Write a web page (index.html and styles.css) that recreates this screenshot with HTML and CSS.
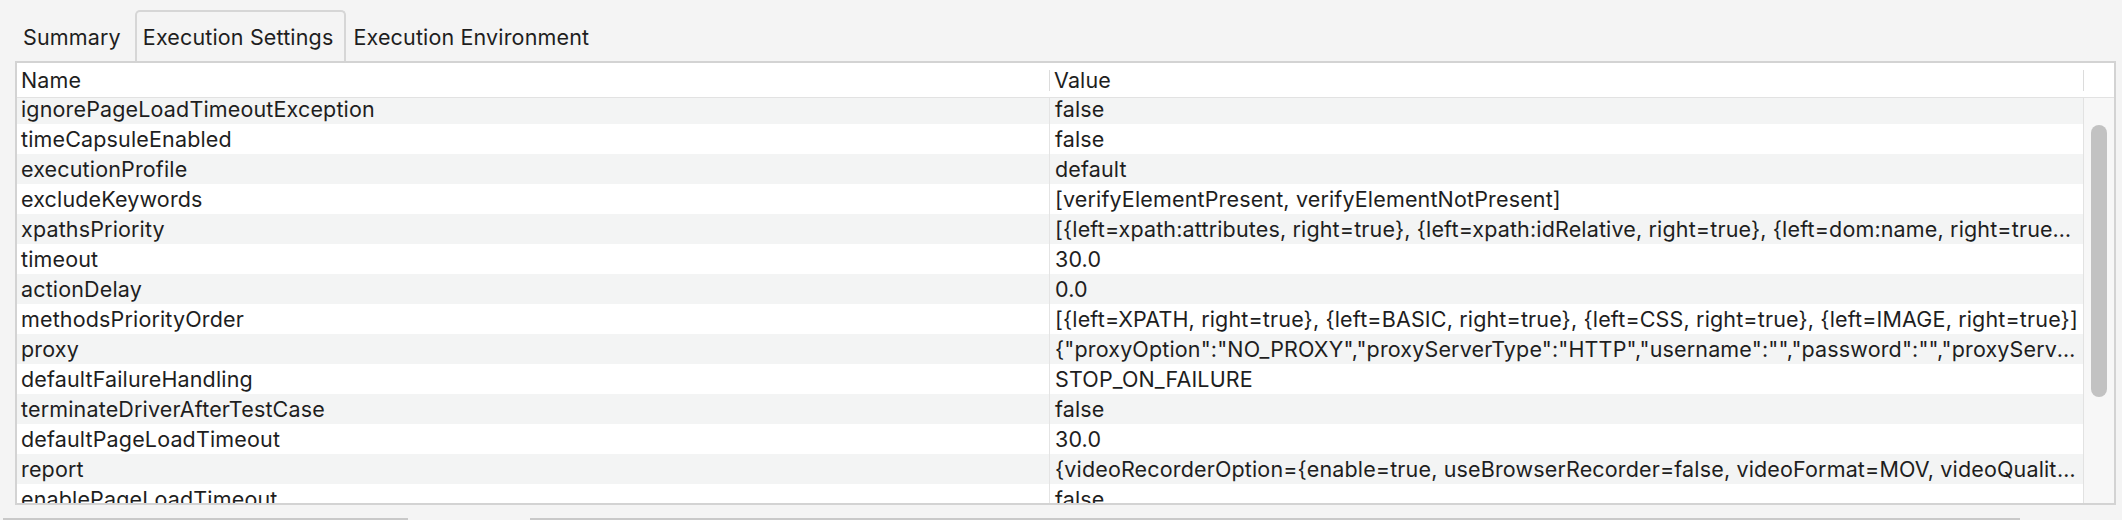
FILE: index.html
```html
<!DOCTYPE html>
<html>
<head>
<meta charset="utf-8">
<link rel="stylesheet" href="styles.css">
</head>
<body>
<div class="page">
  <div class="tabs">
    <div class="tab tab-first">Summary</div>
    <div class="tab tab-active">Execution Settings</div>
    <div class="tab tab-after">Execution Environment</div>
  </div>
  <div class="table">
    <div class="thead">
      <div class="th th-name">Name</div>
      <div class="th th-value">Value</div>
      <div class="th th-end"></div>
    </div>
    <div class="tbody">
      <div class="rows">
        <div class="rows-inner">
          <div class="row"><div class="cell name">ignorePageLoadTimeoutException</div><div class="cell value">false</div></div>
          <div class="row"><div class="cell name">timeCapsuleEnabled</div><div class="cell value">false</div></div>
          <div class="row"><div class="cell name">executionProfile</div><div class="cell value">default</div></div>
          <div class="row"><div class="cell name">excludeKeywords</div><div class="cell value">[verifyElementPresent, verifyElementNotPresent]</div></div>
          <div class="row"><div class="cell name">xpathsPriority</div><div class="cell value">[{left=xpath:attributes, right=true}, {left=xpath:idRelative, right=true}, {left=dom:name, right=true}, {left=xpath:link, right=true}, {left=xpath:neighbor, right=true}, {left=xpath:href, right=true}, {left=xpath:img, right=true}, {left=xpath:position, right=true}]</div></div>
          <div class="row"><div class="cell name">timeout</div><div class="cell value">30.0</div></div>
          <div class="row"><div class="cell name">actionDelay</div><div class="cell value">0.0</div></div>
          <div class="row"><div class="cell name">methodsPriorityOrder</div><div class="cell value">[{left=XPATH, right=true}, {left=BASIC, right=true}, {left=CSS, right=true}, {left=IMAGE, right=true}]</div></div>
          <div class="row"><div class="cell name">proxy</div><div class="cell value">{"proxyOption":"NO_PROXY","proxyServerType":"HTTP","username":"","password":"","proxyServerAddress":"","proxyServerPort":0,"exceptionList":"","applyToDesiredCapabilities":true}</div></div>
          <div class="row"><div class="cell name">defaultFailureHandling</div><div class="cell value">STOP_ON_FAILURE</div></div>
          <div class="row"><div class="cell name">terminateDriverAfterTestCase</div><div class="cell value">false</div></div>
          <div class="row"><div class="cell name">defaultPageLoadTimeout</div><div class="cell value">30.0</div></div>
          <div class="row"><div class="cell name">report</div><div class="cell value">{videoRecorderOption={enable=true, useBrowserRecorder=false, videoFormat=MOV, videoQuality=LOW, recordAllTestSteps=false, allowedRecordIfFailed=true}}</div></div>
          <div class="row"><div class="cell name">enablePageLoadTimeout</div><div class="cell value">false</div></div>
        </div>
      </div>
      <div class="vscroll"><div class="thumb"></div></div>
    </div>
  </div>
  <div class="below">
    <div class="bar bar-left"></div>
    <div class="bar bar-right"></div>
  </div>
</div>
</body>
</html>
```

FILE: styles.css
```css
* { box-sizing: border-box; }
html, body { margin: 0; padding: 0; }
body {
  background: #f4f4f4;
  font-family: "Inter", "Liberation Sans", sans-serif;
  font-size: 21.5px;
  letter-spacing: 0.15px;
  color: #1e1e1e;
  width: 2122px;
  height: 520px;
  overflow: hidden;
}
.page { padding-top: 10px; }
.tabs {
  display: flex;
  align-items: stretch;
  height: 51px;
  padding-left: 15px;
}
.tab {
  display: flex;
  align-items: center;
  padding: 1px 8px 0;
  border: 2px solid transparent;
  border-bottom: none;
  white-space: nowrap;
}
.tab-first { padding-left: 6px; padding-right: 6px; }
.tab-active {
  margin-left: 6px;
  padding-left: 6px;
  padding-right: 11px;
  border-color: #d6d6d6;
  border-radius: 5px 5px 0 0;
}
.tab-after { padding-left: 5px; }

.table {
  margin-left: 15px;
  width: 2101px;
  border: 2px solid #d3d3d3;
  background: #ffffff;
}
.thead {
  display: flex;
  height: 35px;
  border-bottom: 1px solid #e2e2e2;
  background: #ffffff;
}
.th {
  display: flex;
  align-items: center;
  padding-left: 4px;
  position: relative;
}
.th-name { width: 1032px; }
.th-value { width: 1034px; padding-left: 5px; }
.th-end { flex: 1; }
.th-value::before, .th-end::before {
  content: "";
  position: absolute;
  left: 0;
  top: 7px;
  bottom: 6px;
  width: 1px;
  background: #dcdcdc;
}
.tbody {
  display: flex;
  height: 405px;
}
.rows {
  width: 2066px;
  overflow: hidden;
}
.rows-inner { margin-top: -4px; }
.row {
  display: flex;
  height: 30px;
  align-items: stretch;
}
.row:nth-child(odd) { background: #f3f4f4; }
.row:nth-child(even) { background: #ffffff; }
.cell {
  display: flex;
  align-items: center;
  white-space: nowrap;
  overflow: hidden;
}
.cell.name { width: 1032px; padding-left: 4px; }
.cell.value {
  display: block;
  flex: 1;
  min-width: 0;
  line-height: 30px;
  padding: 0 4px 0 5px;
  border-left: 1px solid #e4e4e4;
  text-overflow: ellipsis;
}
.vscroll {
  flex: 1;
  background: #f7f7f7;
  border-left: 1px solid #e2e2e2;
  padding: 27px 0 0 7px;
}
.thumb {
  width: 16px;
  height: 272px;
  border-radius: 8px;
  background: #c2c2c2;
}
.below {
  display: flex;
  margin-top: 13px;
  padding-left: 3px;
}
.bar { height: 2px; background: #c9c9c9; }
.bar-left { width: 405px; }
.bar-right { width: 1490px; margin-left: 122px; }
```
